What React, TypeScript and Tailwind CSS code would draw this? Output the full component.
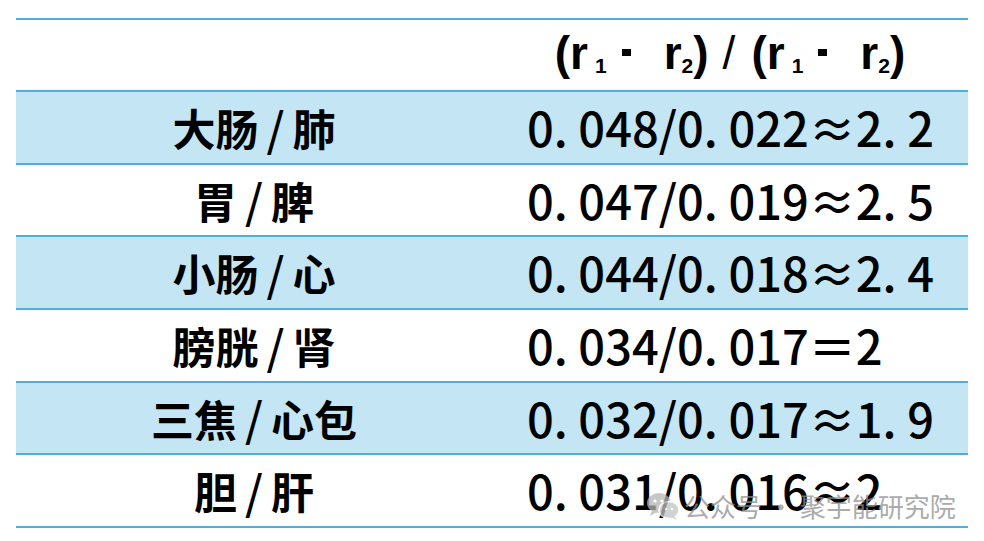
import React from "react";

const rows = [
  { a: "大肠", b: "肺", ratio: "0. 048/0. 022≈2. 2", blue: true },
  { a: "胃", b: "脾", ratio: "0. 047/0. 019≈2. 5", blue: false },
  { a: "小肠", b: "心", ratio: "0. 044/0. 018≈2. 4", blue: true },
  { a: "膀胱", b: "肾", ratio: "0. 034/0. 017＝2", blue: false },
  { a: "三焦", b: "心包", ratio: "0. 032/0. 017≈1. 9", blue: true },
  { a: "胆", b: "肝", ratio: "0. 031/0. 016≈2", blue: false },
];

function Dot() {
  return <span className="inline-block w-[9px] h-[7px] bg-black ml-[15px] mr-[33px] mb-[2px]" />;
}

function R({ n }: { n: string }) {
  return (
    <>
      <span>r</span>
      <span className={`text-[21px] mt-[24px] ${n === "1" ? "ml-[7px]" : ""}`}>{n}</span>
    </>
  );
}

function WeChatIcon() {
  return (
    <svg width="34" height="30" viewBox="0 0 34 30" className="shrink-0">
      <ellipse cx="13" cy="12" rx="12" ry="10" fill="#b5b5b5" />
      <path d="M6 19 L4 25 L11 21 Z" fill="#b5b5b5" />
      <ellipse cx="23" cy="19" rx="10" ry="8.5" fill="#c4c4c4" stroke="#fff" strokeWidth="1.5" />
      <path d="M28 25 L31 29 L24 26 Z" fill="#c4c4c4" />
      <circle cx="9" cy="10" r="1.6" fill="#fff" />
      <circle cx="16" cy="10" r="1.6" fill="#fff" />
      <circle cx="20" cy="18" r="1.3" fill="#fff" />
      <circle cx="26" cy="18" r="1.3" fill="#fff" />
    </svg>
  );
}

export default function App() {
  return (
    <div className="relative w-[984px] h-[541px] bg-white overflow-hidden">
      <div className="pt-[18px] pl-[16px]">
        <div className="w-[952px]">
          {/* header */}
          <div className="flex h-[74px] border-t-2 border-b-2 border-[#4fade0]">
            <div className="w-[476px]" />
            <div
              className="flex-1 flex items-center justify-center font-bold text-[46px] leading-none text-black pb-[4px]"
              style={{ fontFamily: '"Liberation Sans", Arial, sans-serif' }}
            >
              <span>(</span>
              <R n="1" />
              <Dot />
              <R n="2" />
              <span>)</span>
              <span className="ml-[14px] mr-[16px] font-normal">/</span>
              <span>(</span>
              <R n="1" />
              <Dot />
              <R n="2" />
              <span>)</span>
            </div>
          </div>

          {rows.map((r, i) => (
            <div
              key={i}
              className={`flex h-[72.67px] border-b-2 border-[#4fade0] ${r.blue ? "bg-[#c3e5f4]" : "bg-white"}`}
            >
              <div
                className="w-[476px] flex items-center justify-center font-bold text-[43px] text-black"
                style={{ fontFamily: '"Noto Sans CJK SC", sans-serif' }}
              >
                <span>{r.a}</span>
                <span className="mx-[8px] font-medium text-[46px]">/</span>
                <span>{r.b}</span>
              </div>
              <div
                className="flex-1 flex items-center pl-[35px] text-[47px] font-medium text-black whitespace-pre"
                style={{ fontFamily: '"Noto Sans CJK SC", sans-serif' }}
              >
                {r.ratio}
              </div>
            </div>
          ))}
        </div>
      </div>

      {/* watermark */}
      <div
        className="absolute left-[646px] top-[486px] flex items-center gap-[4px] text-[26px] text-[#8f8f8f] opacity-75"
        style={{ fontFamily: '"Noto Sans CJK SC", sans-serif' }}
      >
        <WeChatIcon />
        <span>公众号 · 聚宇能研究院</span>
      </div>
    </div>
  );
}
